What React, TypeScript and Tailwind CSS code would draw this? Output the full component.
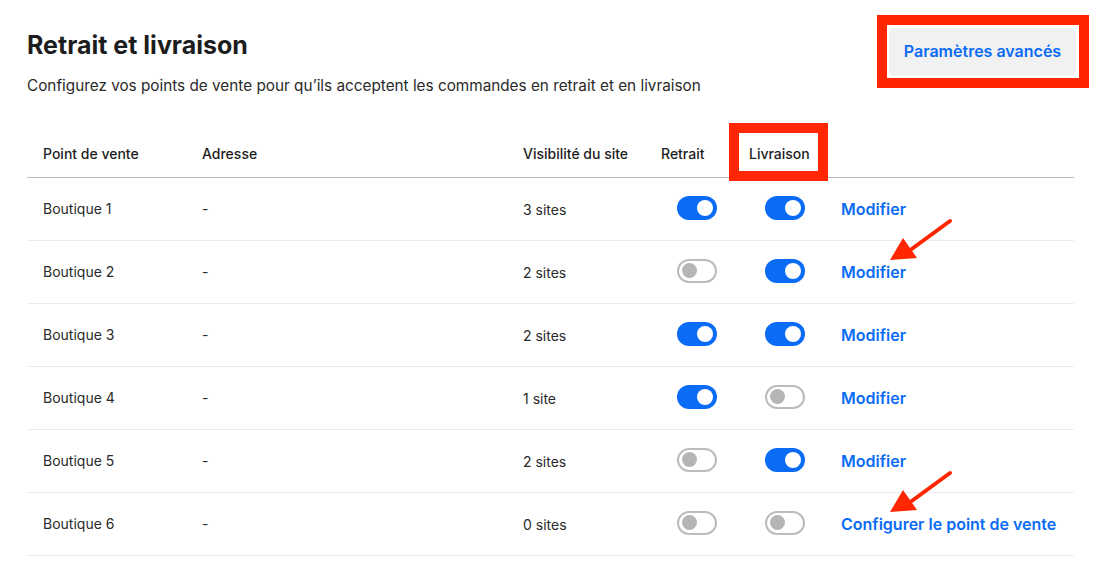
import React from "react"

type Store = {
  name: string
  sites: string
  pickup: boolean
  delivery: boolean
  action: string
  arrow?: boolean
}

const stores: Store[] = [
  { name: "Boutique 1", sites: "3 sites", pickup: true, delivery: true, action: "Modifier" },
  { name: "Boutique 2", sites: "2 sites", pickup: false, delivery: true, action: "Modifier", arrow: true },
  { name: "Boutique 3", sites: "2 sites", pickup: true, delivery: true, action: "Modifier" },
  { name: "Boutique 4", sites: "1 site", pickup: true, delivery: false, action: "Modifier" },
  { name: "Boutique 5", sites: "2 sites", pickup: false, delivery: true, action: "Modifier" },
  { name: "Boutique 6", sites: "0 sites", pickup: false, delivery: false, action: "Configurer le point de vente", arrow: true },
]

const cols = "grid grid-cols-[159px_321px_138px_88px_92px_1fr] items-center"

function Toggle({ on }: { on: boolean }) {
  if (on) {
    return (
      <span className="flex h-6 w-10 items-center justify-end rounded-full bg-[#0a6bf5] pr-[4px]">
        <span className="h-4 w-4 rounded-full bg-white" />
      </span>
    )
  }
  return (
    <span className="flex h-6 w-10 items-center rounded-full border-2 border-[#bcbcbc] bg-white pl-[3px]">
      <span className="h-[15px] w-[15px] rounded-full bg-[#b5b5b5]" />
    </span>
  )
}

function Arrow() {
  return (
    <svg className="pointer-events-none absolute left-[64px] top-[-47px]" width="70" height="60" viewBox="0 0 70 60">
      <line x1="61" y1="8" x2="20" y2="38" stroke="#ff2600" strokeWidth="4" strokeLinecap="round" />
      <polygon points="1,47 14,25 28,45" fill="#ff2600" />
    </svg>
  )
}

export default function App() {
  return (
    <div className="min-h-[582px] bg-white pl-[27px] pr-[29px] pt-[29px] text-[#222] [font-family:Inter,'Noto_Sans',sans-serif]">
      <div className="flex items-start justify-between">
        <div>
          <h1 className="text-[25px] font-bold leading-8 text-[#1d1d1d]">Retrait et livraison</h1>
          <p className="mt-[13px] text-[15.3px] leading-6 text-[#2a2a2a]">
            Configurez vos points de vente pour qu’ils acceptent les commandes en retrait et en livraison
          </p>
        </div>
        <div className="relative -mr-[2px] -mt-[1px]">
          <button className="h-12 w-[187px] rounded-md bg-[#f1f1f1] pb-[2px] text-[16px] font-semibold text-[#0a6bf5]">
            Paramètres avancés
          </button>
          <span className="pointer-events-none absolute -bottom-[12px] -left-[12px] -right-[13px] -top-[13px] border-[10px] border-[#ff2600]" />
        </div>
      </div>

      <div className="mt-[31px] text-[14px]">
        <div className={`${cols} h-[49px] border-b border-[#bdbdbd] font-medium text-[#1d1d1d]`}>
          <div className="pl-4">Point de vente</div>
          <div className="pl-4">Adresse</div>
          <div className="pl-4">Visibilité du site</div>
          <div className="pl-4">Retrait</div>
          <div className="pl-4">
            <span className="relative">
              Livraison
              <span className="pointer-events-none absolute -bottom-[19px] -left-[20px] -right-[18px] -top-[22px] border-[10px] border-[#ff2600]" />
            </span>
          </div>
          <div />
        </div>
        {stores.map((s) => (
          <div key={s.name} className={`${cols} h-[63px] border-b border-[#ececec] text-[#2a2a2a]`}>
            <div className="pl-4 -mt-[1px]">{s.name}</div>
            <div className="pl-4 -mt-[1px]">-</div>
            <div className="pl-4">{s.sites}</div>
            <div className="-mt-[3px] flex pl-8">
              <Toggle on={s.pickup} />
            </div>
            <div className="-mt-[3px] flex pl-8">
              <Toggle on={s.delivery} />
            </div>
            <div className="relative -mt-[1px] pl-4">
              <span className="text-[16px] font-semibold text-[#0a6bf5]">{s.action}</span>
              {s.arrow && <Arrow />}
            </div>
          </div>
        ))}
      </div>
    </div>
  )
}
